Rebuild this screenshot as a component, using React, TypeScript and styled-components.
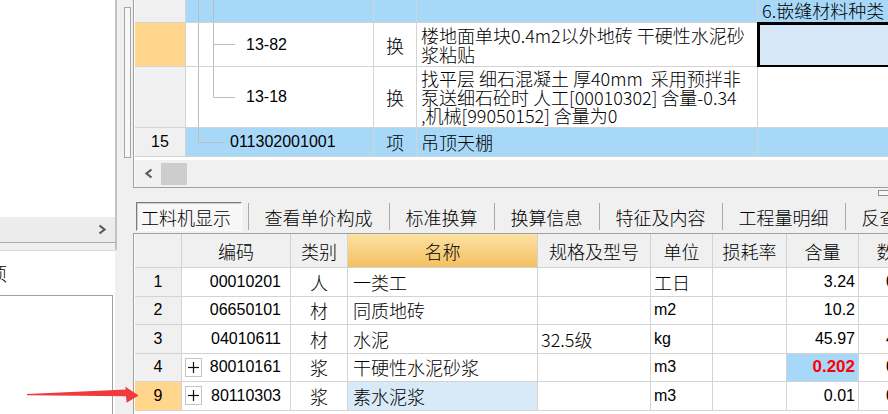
import React from 'react';
import styled, { createGlobalStyle } from 'styled-components';

const GlobalStyle = createGlobalStyle`
  html, body {
    margin: 0;
    padding: 0;
    background: #f0f0f0;
    overflow: hidden;
  }
  body {
    font-family: "Noto Sans CJK SC", "Noto Sans", sans-serif;
    font-size: 18px;
    font-weight: 300;
    line-height: 18px;
    color: #000;
  }
  * {
    box-sizing: border-box;
  }
`;

const Screen = styled.div`
  position: relative;
  width: 888px;
  height: 414px;
  display: flex;
  overflow: hidden;
  background: #f0f0f0;
`;

/* ---------- left side ---------- */

const LeftColumn = styled.div`
  width: 117px;
  flex: none;
  display: flex;
  flex-direction: column;
`;

const LeftTree = styled.div`
  height: 217px;
  background: #fff;
  border-right: 2px solid #c2c2c2;
`;

const NavBar = styled.div`
  height: 26px;
  display: flex;
  align-items: center;
  justify-content: flex-end;
  padding-right: 8px;
  background: #ececec;
  border-right: 2px solid #c2c2c2;
  border-bottom: 1px solid #a9a9a9;
`;

const Band = styled.div`
  height: 7px;
  background: #f0f0f0;
  border-right: 2px solid #c2c2c2;
`;

const LowerPanel = styled.div`
  flex: 1;
  width: 115px;
  display: flex;
  flex-direction: column;
  background: #fff;
  border-top: 1px solid #d6d6d6;
  overflow: hidden;
`;

const PanelLabel = styled.div`
  height: 44px;
  display: flex;
  align-items: center;
  margin-left: -11px;
  white-space: nowrap;
`;

const PanelBox = styled.div`
  flex: 1;
  width: 113px;
  border-top: 1px solid #a0a0a0;
  border-right: 1px solid #a0a0a0;
`;

const Splitter = styled.div`
  width: 16px;
  flex: none;
  padding: 7px 0 0 7px;
`;

const VThumb = styled.div`
  width: 7px;
  height: 151px;
  border: 1px solid #a6a6a6;
  background: #f8f8f8;
`;

/* ---------- main area ---------- */

const Main = styled.div`
  flex: 1;
  min-width: 0;
  display: flex;
  flex-direction: column;
  overflow: hidden;
`;

const TopGrid = styled.div`
  height: 188px;
  flex: none;
  display: flex;
  flex-direction: column;
  border-left: 1px solid #a0a0a0;
  border-bottom: 1px solid #a0a0a0;
  padding-left: 1px;
  background: #fff;
`;

const TopRow = styled.div<{ $h: number }>`
  display: grid;
  grid-template-columns: 51px 188px 43px 341px 140px;
  height: ${p => p.$h}px;
  flex: none;
`;

const Cell = styled.div<{ $bg?: string; $justify?: string; $pl?: number; $pr?: number }>`
  display: flex;
  align-items: center;
  justify-content: ${p => p.$justify ?? 'flex-start'};
  padding: 0 ${p => p.$pr ?? 4}px 0 ${p => p.$pl ?? 4}px;
  background: ${p => p.$bg ?? '#fff'};
  border-right: 1px solid #d3d3d3;
  border-bottom: 1px solid #d3d3d3;
  white-space: nowrap;
  overflow: hidden;
  min-width: 0;
`;

const RowNum = styled(Cell)`
  justify-content: center;
  background: ${p => p.$bg ?? '#f0f0f0'};
`;

const CodeCell = styled(Cell)`
  padding: 0;
`;

const MultiLine = styled.div`
  line-height: 18.5px;
`;

const TailCell = styled(Cell)`
  align-items: flex-end;
  padding-bottom: 3px;
`;

const SelectedCell = styled(Cell)`
  background: #d7e9f8;
  outline: 3px solid #000;
  outline-offset: -2px;
`;

const TreeSvg = styled.svg`
  flex: none;
  display: block;
`;

const Num = styled.span<{ $red?: boolean }>`
  font-family: "Liberation Sans", Arial, sans-serif;
  font-size: 16px;
  font-weight: 400;
  ${p => (p.$red ? 'color: #ff0000; font-weight: bold; font-size: 17px;' : '')}
`;

const WhiteGap = styled.div`
  height: 3px;
  flex: none;
  background: #fff;
`;

const HScroll = styled.div`
  height: 27px;
  flex: none;
  display: flex;
  align-items: center;
  gap: 7px;
  padding-left: 9px;
  background: #f0f0f0;
`;

const HThumb = styled.div`
  width: 26px;
  height: 22px;
  background: #cdcdcd;
`;

const GapRow = styled.div`
  height: 12px;
  flex: none;
  display: flex;
  justify-content: flex-end;
  align-items: flex-start;
  padding-top: 2px;
`;

const MiniWindow = styled.div`
  width: 14px;
  height: 6px;
  margin-right: -4px;
  border: 1px solid #8e8e8e;
  background: #f8f8f8;
`;

const TabBar = styled.div`
  height: 33px;
  flex: none;
  display: flex;
  align-items: center;
  padding-left: 3px;
  white-space: nowrap;
`;

const ActiveTab = styled.div`
  flex: none;
  height: 29px;
  width: 106px;
  display: flex;
  align-items: center;
  padding: 0 4px;
  margin-right: 6px;
  background: #f7f7f7;
  border-top: 1px solid #7c7c7c;
  border-left: 1px solid #7c7c7c;
  border-right: 1px solid #fff;
  border-bottom: 1px solid #fff;
  box-shadow: inset 1px 1px 0 #cfcfcf;
`;

const Tab = styled.div`
  flex: none;
  height: 27px;
  display: flex;
  align-items: center;
  padding: 0 16.5px 0 15.5px;
  border-left: 1px solid #a8a8a8;
`;

const BottomGrid = styled.div`
  flex: 1;
  border-top: 1px solid #a0a0a0;
  border-left: 1px solid #a0a0a0;
  padding-left: 1px;
  background: #fff;
`;

const BRow = styled.div<{ $h: number }>`
  display: grid;
  grid-template-columns: 47px 109px 57px 190px 113px 62px 74px 72px 72px;
  height: ${p => p.$h}px;
`;

const HeadCell = styled(Cell)`
  justify-content: center;
  background: #f0f0f0;
`;

const NameHead = styled(HeadCell)`
  background: linear-gradient(#fce2a4, #f4bf60);
`;

const PlusBox = styled.div`
  width: 17px;
  height: 19px;
  flex: none;
  display: flex;
  align-items: center;
  justify-content: center;
  border: 1px solid #c4c4c4;
  background: #fff;
`;

const ArrowLayer = styled.svg`
  position: absolute;
  left: 0;
  top: 0;
  pointer-events: none;
`;

/* ---------- pieces ---------- */

type Line = [number, number, number, number];

const TreeGuide: React.FC<{ w: number; h: number; lines: Line[] }> = ({ w, h, lines }) => (
  <TreeSvg width={w} height={h} viewBox={`0 0 ${w} ${h}`}>
    {lines.map(([x1, y1, x2, y2], i) => (
      <line key={i} x1={x1} y1={y1} x2={x2} y2={y2} stroke="#bdbdbd" strokeWidth={1} />
    ))}
  </TreeSvg>
);

const Chevron: React.FC<{ dir: 'left' | 'right' }> = ({ dir }) => (
  <svg width={10} height={11} viewBox="0 0 10 11">
    <polyline
      points={dir === 'left' ? '7.5,1.5 2.5,5.5 7.5,9.5' : '2.5,1.5 7.5,5.5 2.5,9.5'}
      fill="none"
      stroke="#5a5a5a"
      strokeWidth={2.2}
    />
  </svg>
);

const Plus = () => (
  <PlusBox>
    <svg width={11} height={11} viewBox="0 0 11 11">
      <line x1={0} y1={5.5} x2={11} y2={5.5} stroke="#111" strokeWidth={1.2} />
      <line x1={5.5} y1={0} x2={5.5} y2={11} stroke="#111" strokeWidth={1.2} />
    </svg>
  </PlusBox>
);

const BLUE = '#a8d8f8';
const ORANGE = '#ffd68c';

type Item = {
  no: string;
  noBg?: string;
  plus?: boolean;
  code: string;
  kind: string;
  name: string;
  nameBg?: string;
  spec: string;
  unit: string;
  unitNum?: boolean;
  qty: string;
  qtyHot?: boolean;
  total: string;
};

const items: Item[] = [
  { no: '1', code: '00010201', kind: '人', name: '一类工', spec: '', unit: '工日', qty: '3.24', total: '0.324' },
  { no: '2', code: '06650101', kind: '材', name: '同质地砖', spec: '', unit: 'm2', unitNum: true, qty: '10.2', total: '1.02' },
  { no: '3', code: '04010611', kind: '材', name: '水泥', spec: '32.5级', unit: 'kg', unitNum: true, qty: '45.97', total: '4.597' },
  { no: '4', plus: true, code: '80010161', kind: '浆', name: '干硬性水泥砂浆', spec: '', unit: 'm3', unitNum: true, qty: '0.202', qtyHot: true, total: '0.020' },
  { no: '9', noBg: ORANGE, plus: true, code: '80110303', kind: '浆', name: '素水泥浆', nameBg: '#d8eaf8', spec: '', unit: 'm3', unitNum: true, qty: '0.01', total: '0.001' },
];

const tabs = ['查看单价构成', '标准换算', '换算信息', '特征及内容', '工程量明细', '反查图形工程量'];

const App: React.FC = () => {
  return (
    <>
      <GlobalStyle />
      <Screen>
        <LeftColumn>
          <LeftTree />
          <NavBar>
            <Chevron dir="right" />
          </NavBar>
          <Band />
          <LowerPanel>
            <PanelLabel>项</PanelLabel>
            <PanelBox />
          </LowerPanel>
        </LeftColumn>

        <Splitter>
          <VThumb />
        </Splitter>

        <Main>
          <TopGrid>
            <TopRow $h={23}>
              <RowNum />
              <CodeCell $bg={BLUE}>
                <TreeGuide w={60} h={22} lines={[[12.5, 0, 12.5, 22], [27.5, 0, 27.5, 22]]} />
              </CodeCell>
              <Cell $bg={BLUE} />
              <Cell $bg={BLUE} />
              <TailCell $bg={BLUE}>6.嵌缝材料种类</TailCell>
            </TopRow>

            <TopRow $h={44}>
              <RowNum $bg={ORANGE} />
              <CodeCell>
                <TreeGuide
                  w={60}
                  h={43}
                  lines={[[12.5, 0, 12.5, 43], [27.5, 0, 27.5, 43], [27.5, 21.5, 49, 21.5]]}
                />
                <Num>13-82</Num>
              </CodeCell>
              <Cell $justify="center">换</Cell>
              <Cell>
                <MultiLine>
                  楼地面单块0.4m2以外地砖 干硬性水泥砂
                  <br />
                  浆粘贴
                </MultiLine>
              </Cell>
              <SelectedCell />
            </TopRow>

            <TopRow $h={61}>
              <RowNum />
              <CodeCell>
                <TreeGuide
                  w={60}
                  h={60}
                  lines={[[12.5, 0, 12.5, 60], [27.5, 0, 27.5, 30.5], [27.5, 30.5, 49, 30.5]]}
                />
                <Num>13-18</Num>
              </CodeCell>
              <Cell $justify="center">换</Cell>
              <Cell>
                <MultiLine>
                  找平层 细石混凝土 厚40mm&nbsp;&nbsp;采用预拌非
                  <br />
                  泵送细石砼时 人工[00010302] 含量-0.34
                  <br />
                  ,机械[99050152] 含量为0
                </MultiLine>
              </Cell>
              <Cell />
            </TopRow>

            <TopRow $h={29}>
              <RowNum>
                <Num>15</Num>
              </RowNum>
              <CodeCell $bg={BLUE}>
                <TreeGuide w={44} h={28} lines={[[12.5, 0, 12.5, 14.5], [12.5, 14.5, 37, 14.5]]} />
                <Num>011302001001</Num>
              </CodeCell>
              <Cell $bg={BLUE} $justify="center">
                项
              </Cell>
              <Cell $bg={BLUE}>吊顶天棚</Cell>
              <Cell $bg={BLUE} />
            </TopRow>

            <WhiteGap />
            <HScroll>
              <Chevron dir="left" />
              <HThumb />
            </HScroll>
          </TopGrid>

          <GapRow>
            <MiniWindow />
          </GapRow>

          <TabBar>
            <ActiveTab>工料机显示</ActiveTab>
            {tabs.map(t => (
              <Tab key={t}>{t}</Tab>
            ))}
          </TabBar>

          <BottomGrid>
            <BRow $h={34}>
              <HeadCell />
              <HeadCell>编码</HeadCell>
              <HeadCell>类别</HeadCell>
              <NameHead>名称</NameHead>
              <HeadCell>规格及型号</HeadCell>
              <HeadCell>单位</HeadCell>
              <HeadCell>损耗率</HeadCell>
              <HeadCell>含量</HeadCell>
              <HeadCell>数量</HeadCell>
            </BRow>
            {items.map(it => (
              <BRow $h={28.5} key={it.no}>
                <RowNum $bg={it.noBg}>
                  <Num>{it.no}</Num>
                </RowNum>
                <Cell $justify={it.plus ? 'space-between' : 'flex-end'} $pl={3} $pr={9}>
                  {it.plus && <Plus />}
                  <Num>{it.code}</Num>
                </Cell>
                <Cell $justify="center">{it.kind}</Cell>
                <Cell $bg={it.nameBg} $pl={5}>
                  {it.name}
                </Cell>
                <Cell $pl={3}>{it.spec}</Cell>
                <Cell $pl={3}>{it.unitNum ? <Num>{it.unit}</Num> : it.unit}</Cell>
                <Cell />
                <Cell $justify="flex-end" $pr={3} $bg={it.qtyHot ? BLUE : undefined}>
                  <Num $red={it.qtyHot}>{it.qty}</Num>
                </Cell>
                <Cell $justify="flex-end" $pr={4}>
                  <Num>{it.total}</Num>
                </Cell>
              </BRow>
            ))}
          </BottomGrid>
        </Main>

        <ArrowLayer width={888} height={414} viewBox="0 0 888 414">
          <polygon
            points="27,394 126,389.6 125,386.6 138.6,395.4 126.6,402.8 126,396.2 27,395.2"
            fill="#ef3b3b"
          />
        </ArrowLayer>
      </Screen>
    </>
  );
};

export default App;
